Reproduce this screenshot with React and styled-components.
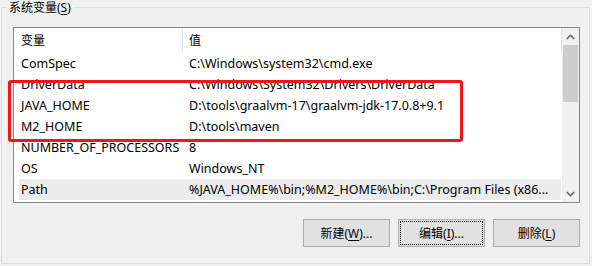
import React from 'react'
import styled, { createGlobalStyle } from 'styled-components'

const GlobalStyle = createGlobalStyle`
  html, body {
    margin: 0;
    padding: 0;
    background: #f0f0f0;
  }
  body {
    font-family: "Noto Sans", "Noto Sans CJK SC", sans-serif;
    font-size: 12px;
    color: #000;
  }
`;

const Page = styled.div`
  position: relative;
  width: 592px;
  height: 266px;
  overflow: hidden;
  background: #f0f0f0;
`;

const Group = styled.fieldset`
  box-sizing: border-box;
  margin: 0 0 0 1px;
  width: 589px;
  height: 264px;
  padding: 12px 9px 0 11px;
  border: 1px solid #dcdcdc;
  min-width: 0;
`;

const Legend = styled.legend`
  padding: 0 2px;
  margin-left: -6px;
  line-height: 15px;
  font-size: 12px;
  color: #000;
`;

const Key = styled.span`
  text-decoration: underline;
  text-underline-offset: 2px;
`;

const ListBox = styled.div`
  box-sizing: border-box;
  width: 567px;
  height: 176px;
  border: 1px solid #828790;
  background: #fff;
  display: grid;
  grid-template-columns: 1fr 17px;
  overflow: hidden;
  font-size: 12.5px;
`;

const Table = styled.div`
  display: flex;
  flex-direction: column;
  overflow: hidden;
`;

const Header = styled.div`
  display: grid;
  grid-template-columns: 169px 1fr;
  height: 25px;
  flex-shrink: 0;
`;

const HeadCell = styled.div`
  display: flex;
  align-items: center;
  padding-left: ${p => p.$pad}px;
  border-right: 1px solid #e5e5e5;
  height: 24px;
  font-size: 12px;
`;

const Row = styled.div`
  display: grid;
  grid-template-columns: 168px 1fr;
  height: 21px;
  flex-shrink: 0;
  margin: 0 1px 0 5px;
  align-items: center;
  background: ${p => (p.$selected ? '#ececec' : 'transparent')};
`;

const Cell = styled.div`
  padding-left: 2px;
  white-space: nowrap;
  line-height: 21px;
`;

const ScrollBar = styled.div`
  display: flex;
  flex-direction: column;
  background: #f0f0f0;
`;

const Arrow = styled.div`
  height: 17px;
  display: flex;
  align-items: center;
  justify-content: center;
  flex-shrink: 0;
`;

const Thumb = styled.div`
  height: 57px;
  margin: 0 1px;
  background: #cdcdcd;
  flex-shrink: 0;
`;

const Track = styled.div`
  flex: 1;
`;

const Buttons = styled.div`
  display: flex;
  justify-content: flex-end;
  gap: 8px;
  margin-top: 16px;
  width: 567px;
`;

const Button = styled.button`
  box-sizing: border-box;
  width: 87px;
  height: 28px;
  background: #e1e1e1;
  border: 1px solid #adadad;
  font-family: "Noto Sans", "Noto Sans CJK SC", sans-serif;
  font-size: 12px;
  color: #000;
  padding: 0;
  outline: ${p => (p.$focused ? '1px dotted #000' : 'none')};
  outline-offset: -3px;
`;

const Highlight = styled.div`
  position: absolute;
  left: 8px;
  top: 80px;
  width: 455px;
  height: 62px;
  box-sizing: border-box;
  border: 3px solid #f01616;
  border-radius: 3px;
  pointer-events: none;
`;

const Chevron = ({ up }) => (
  <svg width="9" height="6" viewBox="0 0 9 6">
    <path
      d={up ? 'M0.8 5 L4.5 1.3 L8.2 5' : 'M0.8 1 L4.5 4.7 L8.2 1'}
      fill="none"
      stroke="#606060"
      strokeWidth="1.6"
    />
  </svg>
);

const vars = [
  ['ComSpec', 'C:\\Windows\\system32\\cmd.exe'],
  ['DriverData', 'C:\\Windows\\System32\\Drivers\\DriverData'],
  ['JAVA_HOME', 'D:\\tools\\graalvm-17\\graalvm-jdk-17.0.8+9.1'],
  ['M2_HOME', 'D:\\tools\\maven'],
  ['NUMBER_OF_PROCESSORS', '8'],
  ['OS', 'Windows_NT'],
  ['Path', '%JAVA_HOME%\\bin;%M2_HOME%\\bin;C:\\Program Files (x86...'],
];

const App = () => (
  <Page>
    <GlobalStyle />
    <Group>
      <Legend>系统变量(<Key>S</Key>)</Legend>
      <ListBox>
        <Table>
          <Header>
            <HeadCell $pad={7}>变量</HeadCell>
            <HeadCell $pad={6}>值</HeadCell>
          </Header>
          {vars.map(([name, value]) => (
            <Row key={name} $selected={name === 'Path'}>
              <Cell>{name}</Cell>
              <Cell>{value}</Cell>
            </Row>
          ))}
        </Table>
        <ScrollBar>
          <Arrow><Chevron up /></Arrow>
          <Thumb />
          <Track />
          <Arrow><Chevron /></Arrow>
        </ScrollBar>
      </ListBox>
      <Buttons>
        <Button>新建(<Key>W</Key>)...</Button>
        <Button $focused>编辑(<Key>I</Key>)...</Button>
        <Button>删除(<Key>L</Key>)</Button>
      </Buttons>
    </Group>
    <Highlight />
  </Page>
);

export default App
